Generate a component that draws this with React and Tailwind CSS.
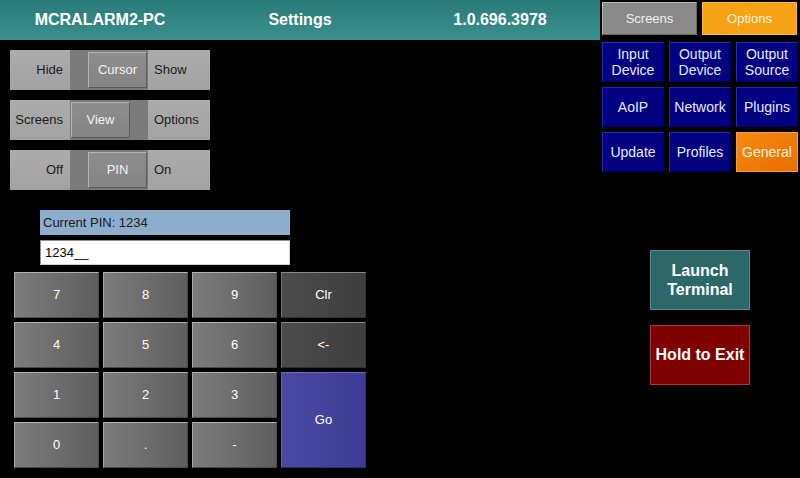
import React from "react";

const font = { fontFamily: '"Liberation Sans", Arial, sans-serif' };

function Toggle({ left, label, right, knobRight }) {
  return (
    <div className="w-[200px] h-[40px] flex items-center bg-gradient-to-b from-[#acacac] to-[#a2a2a2] text-[13px] text-[#1c1c1c]">
      <div className="w-[60px] pr-[7px] text-right">{left}</div>
      <div className={`w-[78px] h-[40px] bg-[#7b7b7b] flex items-center ${knobRight ? "justify-end" : "justify-start"} px-[1px]`}>
        <div className="w-[59px] h-[36px] bg-gradient-to-b from-[#8e8e8e] to-[#848484] border border-t-[#b4b4b4] border-l-[#b4b4b4] border-r-[#5c5c5c] border-b-[#5c5c5c] flex items-center justify-center text-[#f2f2f2]">
          {label}
        </div>
      </div>
      <div className="pl-[6px]">{right}</div>
    </div>
  );
}

function Key({ children, variant = "gray", className = "" }) {
  const styles = {
    gray: "bg-gradient-to-r from-[#7c7c7c] to-[#5e5e5e] border-t-[#b0b0b0] border-l-[#a8a8a8] border-r-[#4a4a4a] border-b-[#4a4a4a]",
    dark: "bg-gradient-to-r from-[#4c4c4c] to-[#3e3e3e] border-t-[#8a8a8a] border-l-[#707070] border-r-[#303030] border-b-[#303030]",
    go: "bg-gradient-to-r from-[#4a4aa4] to-[#3c3c94] border-t-[#6a6ac0] border-l-[#5a5ab0] border-r-[#2e2e78] border-b-[#2e2e78]",
  };
  return (
    <div className={`flex items-center justify-center text-white text-[13px] border ${styles[variant]} ${className}`}>
      {children}
    </div>
  );
}

function NavBtn({ children, active }) {
  return (
    <div
      className={`w-[62px] h-[40px] flex items-center justify-center text-center leading-[16px] text-[14px] border ${
        active
          ? "bg-gradient-to-br from-[#f78a10] to-[#e86e00] border-[#f8a040] text-[#fff2e0]"
          : "bg-[#000080] border-t-[#2a2ab0] border-l-[#2a2ab0] border-r-[#00005a] border-b-[#00005a] text-[#e8e8ff]"
      }`}
    >
      {children}
    </div>
  );
}

export default function App() {
  const keys = [
    ["7", "8", "9"],
    ["4", "5", "6"],
    ["1", "2", "3"],
    ["0", ".", "-"],
  ];
  return (
    <div style={font} className="w-[800px] h-[478px] bg-black flex overflow-hidden">
      {/* Left */}
      <div className="w-[600px] flex flex-col">
        <div className="h-[40px] bg-gradient-to-b from-[#2a7b7b] to-[#3a8f8c] grid grid-cols-3 items-center text-white font-bold text-[16px]">
          <div className="text-center">MCRALARM2-PC</div>
          <div className="text-center">Settings</div>
          <div className="text-center">1.0.696.3978</div>
        </div>
        <div className="flex flex-col gap-[10px] ml-[10px] mt-[10px]">
          <Toggle left="Hide" label="Cursor" right="Show" knobRight />
          <Toggle left="Screens" label="View" right="Options" />
          <Toggle left="Off" label="PIN" right="On" knobRight />
        </div>
        <div className="ml-[40px] mt-[20px] w-[250px] h-[25px] bg-[#8eaccb] text-[#1a1a1a] text-[13px] flex items-center pl-[3px]">
          Current PIN: 1234
        </div>
        <div className="ml-[40px] mt-[5px] w-[250px] h-[25px] bg-white border border-t-[#909090] border-l-[#909090] border-r-[#d0d0d0] border-b-[#d0d0d0] text-black text-[13px] flex items-center pl-[4px]">
          1234__
        </div>
        <div className="ml-[14px] mt-[7px] grid grid-cols-[85px_85px_85px_85px] grid-rows-[46px_46px_46px_46px] gap-x-[4px] gap-y-[4px]">
          {keys[0].map((k) => <Key key={k}>{k}</Key>)}
          <Key variant="dark">Clr</Key>
          {keys[1].map((k) => <Key key={k}>{k}</Key>)}
          <Key variant="dark">&lt;-</Key>
          {keys[2].map((k) => <Key key={k}>{k}</Key>)}
          <Key variant="go" className="row-span-2">Go</Key>
          {keys[3].map((k) => <Key key={k}>{k}</Key>)}
        </div>
      </div>
      {/* Right */}
      <div className="w-[200px] flex flex-col">
        <div className="flex gap-[5px] pl-[2px] pt-[2px]">
          <div className="w-[95px] h-[33px] bg-[#8a8a8a] border border-t-[#b4b4b4] border-l-[#b4b4b4] border-r-[#666] border-b-[#666] flex items-center justify-center text-[#f0f0f0] text-[13px]">
            Screens
          </div>
          <div className="w-[95px] h-[33px] bg-[#f5a214] border border-[#f8b840] flex items-center justify-center text-[#fff4e0] text-[13px]">
            Options
          </div>
        </div>
        <div className="ml-[2px] mt-[7px] grid grid-cols-[62px_62px_62px] gap-x-[5px] gap-y-[5px]">
          <NavBtn>Input<br />Device</NavBtn>
          <NavBtn>Output<br />Device</NavBtn>
          <NavBtn>Output<br />Source</NavBtn>
          <NavBtn>AoIP</NavBtn>
          <NavBtn>Network</NavBtn>
          <NavBtn>Plugins</NavBtn>
          <NavBtn>Update</NavBtn>
          <NavBtn>Profiles</NavBtn>
          <NavBtn active>General</NavBtn>
        </div>
        <div className="ml-[50px] mt-[78px] w-[100px] h-[60px] bg-[#2d6767] border border-[#4f8c8c] flex items-center justify-center text-center text-white font-bold text-[16px] leading-[19px]">
          Launch<br />Terminal
        </div>
        <div className="ml-[50px] mt-[15px] w-[100px] h-[60px] bg-[#800000] border border-[#a83a3a] flex items-center justify-center text-white font-bold text-[16px]">
          Hold to Exit
        </div>
      </div>
    </div>
  );
}
